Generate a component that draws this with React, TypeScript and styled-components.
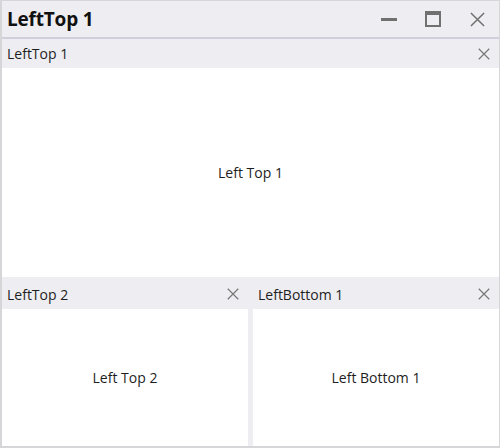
import React from "react";
import styled, { createGlobalStyle } from "styled-components";

const Global = createGlobalStyle`
  html, body { margin: 0; padding: 0; background: #fff; }
  body { font-family: "Open Sans", "Noto Sans", sans-serif; }
  #root { width: 500px; height: 448px; }
`;

const Window = styled.div`
  box-sizing: border-box;
  width: 500px;
  height: 448px;
  border: 1px solid #d6d6d9;
  border-left-width: 2px;
  border-bottom-width: 2px;
  display: flex;
  flex-direction: column;
  background: #eeedf2;
`;

const TitleBar = styled.div`
  height: 36px;
  flex: none;
  display: flex;
  align-items: center;
  padding-left: 5px;
  border-bottom: 2px solid #d0d0dc;
`;

const Title = styled.div`
  flex: 1;
  font-size: 19px;
  font-weight: 700;
  color: #111;
  letter-spacing: -0.2px;
`;

const WinButton = styled.div`
  width: 44px;
  height: 36px;
  display: flex;
  align-items: center;
  justify-content: center;
  color: #707070;
`;

const Body = styled.div`
  flex: 1;
  display: flex;
  flex-direction: column;
  gap: 3px;
  min-height: 0;
`;

const Row = styled.div<{ $grow: number }>`
  flex: ${(p) => p.$grow};
  display: flex;
  gap: 5px;
  min-height: 0;
`;

const Pane = styled.div`
  flex: 1;
  display: flex;
  flex-direction: column;
  min-width: 0;
`;

const PaneHeader = styled.div`
  height: 29px;
  flex: none;
  display: flex;
  align-items: center;
  padding-left: 5px;
  font-size: 14px;
  color: #1e1e1e;
`;

const PaneTitle = styled.div`
  flex: 1;
`;

const PaneClose = styled.div`
  width: 30px;
  height: 29px;
  display: flex;
  align-items: center;
  justify-content: center;
  color: #777;
`;

const PaneContent = styled.div`
  flex: 1;
  background: #fff;
  display: flex;
  align-items: center;
  justify-content: center;
  font-size: 14px;
  color: #1e1e1e;
`;

const X = ({ size }: { size: number }) => (
  <svg width={size} height={size} viewBox="0 0 16 16">
    <path d="M1 1 L15 15 M15 1 L1 15" stroke="currentColor" strokeWidth="1.6" fill="none" />
  </svg>
);

const PaneView = ({ title, content }: { title: string; content: string }) => (
  <Pane>
    <PaneHeader>
      <PaneTitle>{title}</PaneTitle>
      <PaneClose>
        <X size={12} />
      </PaneClose>
    </PaneHeader>
    <PaneContent>{content}</PaneContent>
  </Pane>
);

export default function App() {
  return (
    <>
      <Global />
      <Window>
        <TitleBar>
          <Title>LeftTop 1</Title>
          <WinButton>
            <svg width="16" height="16" viewBox="0 0 16 16">
              <rect x="0" y="7" width="16" height="3" fill="currentColor" />
            </svg>
          </WinButton>
          <WinButton>
            <svg width="16" height="16" viewBox="0 0 16 16">
              <rect x="1" y="1" width="14" height="14" fill="none" stroke="currentColor" strokeWidth="2" />
              <rect x="1" y="1" width="14" height="3" fill="currentColor" />
            </svg>
          </WinButton>
          <WinButton>
            <X size={15} />
          </WinButton>
        </TitleBar>
        <Body>
          <Row $grow={236}>
            <PaneView title="LeftTop 1" content="Left Top 1" />
          </Row>
          <Row $grow={165}>
            <PaneView title="LeftTop 2" content="Left Top 2" />
            <PaneView title="LeftBottom 1" content="Left Bottom 1" />
          </Row>
        </Body>
      </Window>
    </>
  );
}
